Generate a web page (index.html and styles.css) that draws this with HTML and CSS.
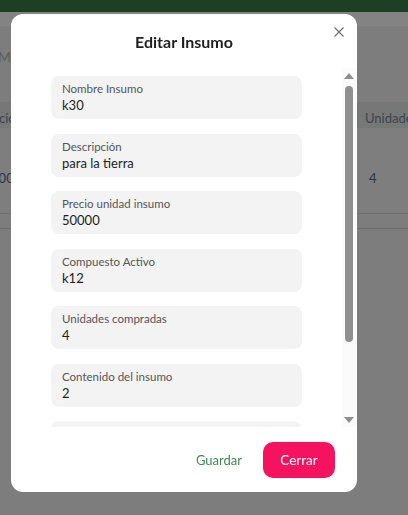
FILE: index.html
```html
<!DOCTYPE html>
<html lang="es">
<head>
<meta charset="utf-8">
<title>Editar Insumo</title>
<link rel="stylesheet" href="styles.css">
</head>
<body>
<div class="page">
  <div class="topbar"></div>
  <div class="strip"></div>
  <div class="toolbar"><span class="muted">Mostrar</span></div>
  <div class="thead">
    <span class="cell first">Precio</span>
    <span class="cell last">Unidades</span>
  </div>
  <div class="trow">
    <span class="cell first num">50000</span>
    <span class="cell last val">4</span>
  </div>
  <div class="tsep"></div>
</div>

<div class="modal">
  <div class="modal-head">
    <h2 class="title">Editar Insumo</h2>
    <button class="close" aria-label="Cerrar">
      <svg width="10" height="10" viewBox="0 0 10 10"><path d="M0.5 0.5 L9.5 9.5 M9.5 0.5 L0.5 9.5" stroke="#6b6b6b" stroke-width="1.1" fill="none"/></svg>
    </button>
  </div>
  <div class="modal-body">
    <div class="fields">
      <div class="field"><span class="label">Nombre Insumo</span><span class="value">k30</span></div>
      <div class="field"><span class="label">Descripción</span><span class="value">para la tierra</span></div>
      <div class="field"><span class="label">Precio unidad insumo</span><span class="value">50000</span></div>
      <div class="field"><span class="label">Compuesto Activo</span><span class="value">k12</span></div>
      <div class="field"><span class="label">Unidades compradas</span><span class="value">4</span></div>
      <div class="field"><span class="label">Contenido del insumo</span><span class="value">2</span></div>
      <div class="field"><span class="label">Fecha</span><span class="value">2024</span></div>
    </div>
    <div class="scrollbar">
      <span class="arrow up"></span>
      <div class="track"><div class="thumb"></div></div>
      <span class="arrow down"></span>
    </div>
  </div>
  <div class="modal-foot">
    <button class="btn-text">Guardar</button>
    <button class="btn-primary">Cerrar</button>
  </div>
</div>
</body>
</html>
```

FILE: styles.css
```css
* { box-sizing: border-box; }
html, body { margin: 0; padding: 0; }
body {
  width: 408px;
  height: 515px;
  overflow: hidden;
  background: #7c7d7c;
  font-family: "Lato", "Noto Sans", sans-serif;
}

.page { display: flex; flex-direction: column; }
.topbar { height: 12px; background: #1d4024; }
.strip { height: 14px; background: #838383; }
.toolbar {
  height: 76px;
  display: flex;
  align-items: center;
  padding-bottom: 16px;
  overflow: hidden;
}
.muted { color: #5d5d5d; font-size: 14px; margin-left: -2px; }
.thead {
  height: 26px;
  background: #757876;
  display: flex;
  justify-content: space-between;
  align-items: center;
  padding-top: 6px;
  font-size: 13px;
  color: #3e4450;
}
.trow {
  height: 86px;
  background: #7e7e7e;
  display: flex;
  justify-content: space-between;
  align-items: center;
  padding-top: 14px;
  font-size: 13px;
  border-bottom: 1px solid #6f6f6f;
}
.tsep { height: 15px; border-bottom: 1px solid #6f6f6f; }
.cell.first { margin-left: -20px; }
.cell.last { width: 43px; white-space: nowrap; }
.num { color: #2c3556; margin-left: -24px !important; }
.val { color: #30343a; padding-left: 4px; }

.modal {
  position: fixed;
  left: 11px;
  top: 14px;
  width: 346px;
  height: 478px;
  background: #fff;
  border-radius: 12px;
  display: flex;
  flex-direction: column;
  overflow: hidden;
}
.modal-head {
  position: relative;
  height: 54px;
  display: flex;
  justify-content: center;
  align-items: flex-start;
}
.title {
  margin: 18px 0 0;
  font-size: 16px;
  font-weight: 700;
  color: #1f1f1f;
}
.close {
  position: absolute;
  top: 13px;
  right: 13px;
  width: 10px;
  height: 10px;
  padding: 0;
  border: 0;
  background: none;
  display: flex;
}

.modal-body {
  height: 359px;
  display: flex;
  overflow: hidden;
}
.fields {
  flex: 1;
  padding: 8px 0 0 40px;
  display: flex;
  flex-direction: column;
  gap: 14.5px;
  overflow: hidden;
}
.field {
  flex: none;
  width: 251px;
  height: 43px;
  background: #f3f3f3;
  border-radius: 8px;
  padding: 6px 11px 0;
  display: flex;
  flex-direction: column;
}
.label { font-size: 11.5px; color: #555; line-height: 14px; }
.value { font-size: 13px; color: #1e1e1e; line-height: 18px; }

.scrollbar {
  width: 14px;
  margin-right: 1px;
  background: #fbfbfb;
  display: flex;
  flex-direction: column;
  align-items: center;
}
.arrow { width: 0; height: 0; border-left: 5px solid transparent; border-right: 5px solid transparent; }
.arrow.up { margin-top: 5px; border-bottom: 6px solid #8f8f8f; }
.arrow.down { margin-bottom: 4px; border-top: 6px solid #8f8f8f; }
.track { flex: 1; width: 100%; display: flex; justify-content: center; padding-top: 7px; }
.thumb { width: 8px; height: 256px; background: #8f8f8f; border-radius: 4px; }

.modal-foot {
  flex: 1;
  display: flex;
  justify-content: flex-end;
  align-items: flex-start;
  padding: 15px 22px 0 0;
  gap: 21px;
}
.btn-text {
  height: 36px;
  border: 0;
  background: none;
  padding: 0;
  font-family: inherit;
  font-size: 13px;
  color: #3f8a52;
}
.btn-primary {
  width: 72px;
  height: 36px;
  border: 0;
  border-radius: 10px;
  background: #f5135f;
  color: #fff;
  font-family: inherit;
  font-size: 13.5px;
}
```
